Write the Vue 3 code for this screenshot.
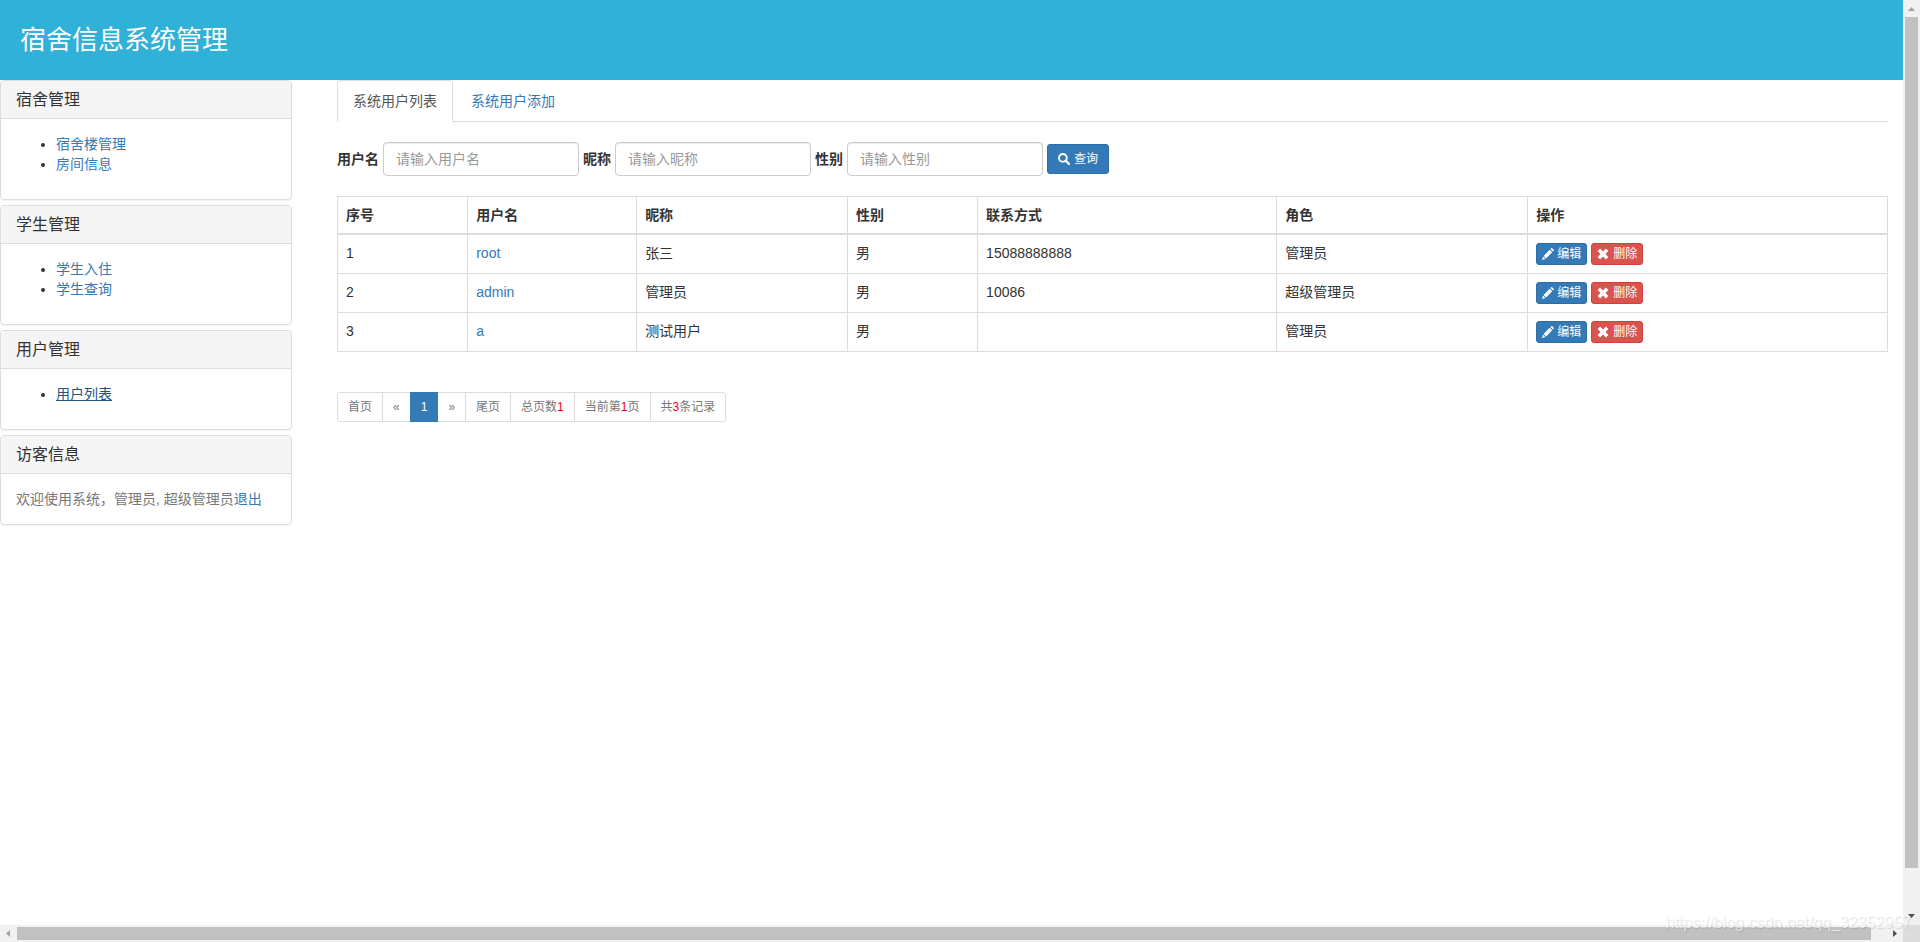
<script setup>
import { ref } from 'vue'

const menus = [
  { title: '宿舍管理', links: [{ text: '宿舍楼管理' }, { text: '房间信息' }] },
  { title: '学生管理', links: [{ text: '学生入住' }, { text: '学生查询' }] },
  { title: '用户管理', links: [{ text: '用户列表', current: true }] }
]

const fields = ref([
  { id: 'username', label: '用户名', hint: '请输入用户名', value: '' },
  { id: 'nickname', label: '昵称', hint: '请输入昵称', value: '' },
  { id: 'gender', label: '性别', hint: '请输入性别', value: '' }
])

const columns = [
  { name: '序号', share: 8.4 },
  { name: '用户名', share: 10.9 },
  { name: '昵称', share: 13.6 },
  { name: '性别', share: 8.4 },
  { name: '联系方式', share: 19.3 },
  { name: '角色', share: 16.2 },
  { name: '操作', share: 23.2 }
]

const users = [
  { id: 1, account: 'root', nickname: '张三', gender: '男', phone: '15088888888', role: '管理员' },
  { id: 2, account: 'admin', nickname: '管理员', gender: '男', phone: '10086', role: '超级管理员' },
  { id: 3, account: 'a', nickname: '测试用户', gender: '男', phone: '', role: '管理员' }
]
</script>

<template>
  <div class="window">
    <div class="page">
      <header class="banner">
        <h1>宿舍信息系统管理</h1>
      </header>
      <div class="columns">
        <aside class="sidebar">
          <section v-for="menu in menus" :key="menu.title" class="panel">
            <h3 class="panel-heading">{{ menu.title }}</h3>
            <div class="panel-body">
              <ul class="menu">
                <li v-for="link in menu.links" :key="link.text">
                  <a href="#" :class="{ current: link.current }">{{ link.text }}</a>
                </li>
              </ul>
            </div>
          </section>
          <section class="panel">
            <h3 class="panel-heading">访客信息</h3>
            <div class="panel-body welcome">欢迎使用系统，管理员, 超级管理员<a href="#">退出</a></div>
          </section>
        </aside>

        <main class="content">
          <nav class="tabs">
            <a href="#" class="tab active">系统用户列表</a>
            <a href="#" class="tab">系统用户添加</a>
          </nav>

          <form class="search" @submit.prevent>
            <template v-for="field in fields" :key="field.id">
              <label :for="field.id">{{ field.label }}</label>
              <input :id="field.id" v-model="field.value" type="text" :placeholder="field.hint" />
            </template>
            <button type="submit" class="btn primary search-btn">
              <svg class="icon" viewBox="0 0 12 12" aria-hidden="true">
                <circle cx="4.9" cy="4.9" r="3.9" fill="none" stroke="currentColor" stroke-width="1.9" />
                <path d="M7.7 7.7 L11 11" stroke="currentColor" stroke-width="2.4" stroke-linecap="round" />
              </svg>
              <span>查询</span>
            </button>
          </form>

          <table class="users">
            <colgroup>
              <col v-for="column in columns" :key="column.name" :style="{ width: column.share + '%' }" />
            </colgroup>
            <thead>
              <tr>
                <th v-for="column in columns" :key="column.name" scope="col">{{ column.name }}</th>
              </tr>
            </thead>
            <tbody>
              <tr v-for="user in users" :key="user.id">
                <td>{{ user.id }}</td>
                <td><a href="#">{{ user.account }}</a></td>
                <td>{{ user.nickname }}</td>
                <td>{{ user.gender }}</td>
                <td>{{ user.phone }}</td>
                <td>{{ user.role }}</td>
                <td>
                  <div class="actions">
                    <button type="button" class="btn primary">
                      <svg class="icon" viewBox="0 0 12 12" aria-hidden="true">
                        <path d="M0 12 L1 8.6 L3.4 11 Z M1.6 7.9 L7.7 1.8 L10.2 4.3 L4.1 10.4 Z M8.4 1.1 L9.2 0.3 Q9.7 -0.1 10.2 0.3 L11.7 1.8 Q12.1 2.3 11.7 2.8 L10.9 3.6 Z" fill="currentColor" />
                      </svg>
                      <span>编辑</span>
                    </button>
                    <button type="button" class="btn danger">
                      <svg class="icon" viewBox="0 0 12 12" aria-hidden="true">
                        <path d="M3.1 0.6 L6 3.5 L8.9 0.6 L11.4 3.1 L8.5 6 L11.4 8.9 L8.9 11.4 L6 8.5 L3.1 11.4 L0.6 8.9 L3.5 6 L0.6 3.1 Z" fill="currentColor" />
                      </svg>
                      <span>删除</span>
                    </button>
                  </div>
                </td>
              </tr>
            </tbody>
          </table>

          <nav class="pager">
            <a href="#">首页</a>
            <a href="#">«</a>
            <a href="#" class="active">1</a>
            <a href="#">»</a>
            <a href="#">尾页</a>
            <span>总页数<em>1</em></span>
            <span>当前第<em>1</em>页</span>
            <span>共<em>3</em>条记录</span>
          </nav>
        </main>
      </div>
    </div>

    <div class="scroll-y" aria-hidden="true">
      <svg class="arrow faded" viewBox="0 0 17 17"><path d="M5 11 L8.5 7 L12 11 Z" /></svg>
      <div class="track"><div class="thumb"></div></div>
      <svg class="arrow" viewBox="0 0 17 17"><path d="M5 6 L8.5 10 L12 6 Z" /></svg>
    </div>
    <div class="scroll-x" aria-hidden="true">
      <svg class="arrow faded" viewBox="0 0 17 17"><path d="M10 5 L6 8.5 L10 12 Z" /></svg>
      <div class="track"><div class="thumb"></div></div>
      <svg class="arrow" viewBox="0 0 17 17"><path d="M7 5 L11 8.5 L7 12 Z" /></svg>
    </div>
    <div class="corner"></div>
    <div class="watermark">https://blog.csdn.net/qq_32352957</div>
  </div>
</template>

<style>
body {
  background: #fff;
}
</style>

<style scoped>
.window,
.window * {
  box-sizing: border-box;
}

.window {
  position: relative;
  display: grid;
  grid-template-columns: minmax(0, 1fr) 17px;
  grid-template-rows: 1fr 17px;
  min-height: 100vh;
  font-family: 'Liberation Sans', 'Noto Sans CJK SC', sans-serif;
  font-size: 14px;
  line-height: 20px;
  color: #333;
}

a {
  color: #337ab7;
  text-decoration: none;
}

.banner {
  padding: 20px;
  background: #31b0d8;
}

.banner h1 {
  margin: 0;
  font-size: 26px;
  line-height: 40px;
  font-weight: 400;
  color: #fff;
}

.columns {
  display: grid;
  grid-template-columns: 292px minmax(0, 1fr);
  gap: 45px;
  padding-right: 15px;
}

.panel {
  margin-bottom: 5px;
  border: 1px solid #ddd;
  border-radius: 4px;
  box-shadow: 0 1px 1px rgba(0, 0, 0, 0.05);
}

.panel-heading {
  margin: 0;
  padding: 10px 15px;
  border-bottom: 1px solid #ddd;
  border-radius: 3px 3px 0 0;
  background: #f5f5f5;
  font-size: 16px;
  line-height: 17px;
  font-weight: 400;
}

.panel-body {
  padding: 15px;
}

.menu {
  margin: 0 0 10px;
  padding-left: 40px;
}

.menu .current {
  color: #23527c;
  text-decoration: underline;
}

.welcome {
  color: #777;
}

.tabs {
  display: flex;
  gap: 2px;
  border-bottom: 1px solid #ddd;
}

.tab {
  margin-bottom: -1px;
  padding: 10px 15px;
  border: 1px solid transparent;
  border-radius: 4px 4px 0 0;
}

.tab.active {
  border-color: #ddd #ddd #fff;
  background: #fff;
  color: #555;
}

.search {
  display: flex;
  align-items: center;
  gap: 4px;
  margin: 20px 0;
}

.search label {
  font-weight: 700;
}

.search input {
  width: 196px;
  height: 34px;
  padding: 6px 12px;
  border: 1px solid #ccc;
  border-radius: 4px;
  background: #fff;
  box-shadow: inset 0 1px 1px rgba(0, 0, 0, 0.075);
  font: inherit;
  color: #555;
}

.search input::placeholder {
  color: #999;
}

.btn {
  display: flex;
  align-items: center;
  gap: 3px;
  height: 22px;
  padding: 0 5px;
  border: 1px solid;
  border-radius: 3px;
  font: inherit;
  font-size: 12px;
  line-height: 18px;
  color: #fff;
}

.primary {
  border-color: #2e6da4;
  background: #337ab7;
}

.danger {
  gap: 4px;
  border-color: #d43f3a;
  background: #d9534f;
}

.search-btn {
  gap: 4px;
  height: 30px;
  padding: 0 10px;
}

.icon {
  width: 12px;
  height: 12px;
}

.users {
  width: 100%;
  table-layout: fixed;
  border-collapse: collapse;
}

.users th,
.users td {
  padding: 8px;
  border: 1px solid #ddd;
  text-align: left;
  vertical-align: top;
}

.users th {
  border-bottom-width: 2px;
}

.actions {
  display: flex;
  gap: 4px;
}

.pager {
  display: flex;
  margin-top: 40px;
  font-size: 12px;
  line-height: 18px;
}

.pager > * {
  margin-right: -1px;
  padding: 5px 10px;
  border: 1px solid #ddd;
  color: #777;
}

.pager > :first-child {
  border-radius: 3px 0 0 3px;
}

.pager > :last-child {
  border-radius: 0 3px 3px 0;
}

.pager .active {
  position: relative;
  border-color: #337ab7;
  background: #337ab7;
  color: #fff;
}

.pager em {
  font-style: normal;
  color: #f00;
}

.scroll-y,
.scroll-x {
  display: flex;
  background: #f1f1f1;
}

.scroll-y {
  flex-direction: column;
}

.track {
  flex: 1;
}

.thumb {
  background: #c1c1c1;
}

.scroll-y .thumb {
  height: 95.5%;
  margin: 0 2px;
}

.scroll-x .track {
  padding: 2px 0;
}

.scroll-x .thumb {
  width: 99.2%;
  height: 100%;
}

.arrow {
  width: 17px;
  height: 17px;
  fill: #505050;
}

.faded {
  fill: #a3a3a3;
}

.corner {
  background: #dcdcdc;
}

.watermark {
  position: absolute;
  right: 9px;
  bottom: 10px;
  font-size: 16px;
  line-height: 18px;
  color: rgba(255, 255, 255, 0.6);
  text-shadow: 1px 1px 1px rgba(0, 0, 0, 0.12);
}
</style>
